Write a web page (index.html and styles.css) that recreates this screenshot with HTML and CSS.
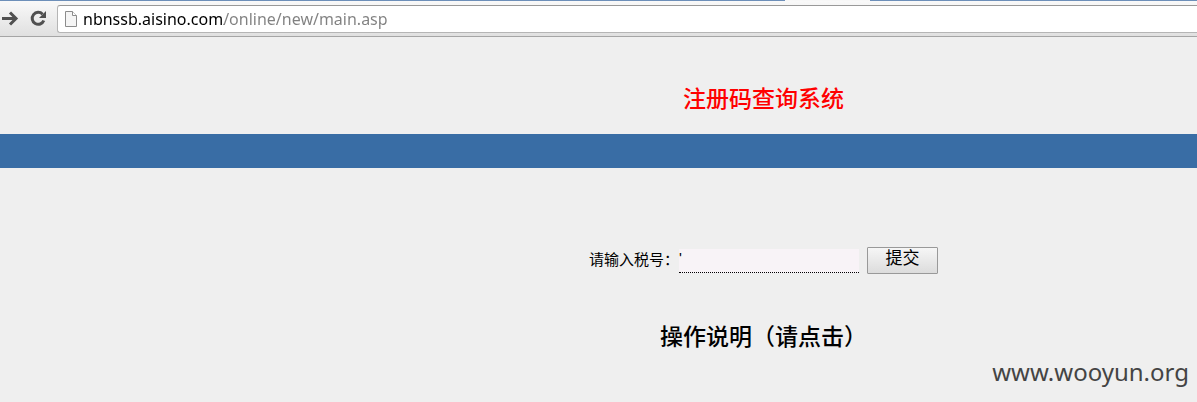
FILE: index.html
```
<!DOCTYPE html>
<html lang="zh-CN">
<head>
  <meta charset="UTF-8" />
  <meta name="viewport" content="width=device-width, initial-scale=1.0"/>
  <title>注册码查询系统</title>
  <link rel="stylesheet" href="styles.css">
</head>
<body>

  <div class="browser">
    <div class="tabs"><div class="tab"></div></div>
    <div class="toolbar">
      <button class="nav-button" type="button" aria-label="前进">
        <svg width="20" height="20" viewBox="0 0 20 20" fill="none" stroke="#505050" stroke-width="3">
          <path d="M2 9.5h14M10 3.5l6 6-6 6"/>
        </svg>
      </button>
      <button class="nav-button" type="button" aria-label="刷新">
        <svg width="20" height="20" viewBox="0 0 20 20">
          <path d="M14.6 5.2A6 6 0 1 0 15.8 11.5" fill="none" stroke="#505050" stroke-width="3"/>
          <path d="M18 2v7h-7z" fill="#505050"/>
        </svg>
      </button>
      <div class="address">
        <svg width="12" height="16" viewBox="0 0 12 16" fill="#f5f5f5" stroke="#8c8c8c">
          <path d="M.5.5h7l4 4v11H.5z"/>
          <path d="M7.5.5v4h4" fill="#fff"/>
        </svg>
        <input type="text" class="url" aria-label="地址" value="nbnssb.aisino.com/online/new/main.asp" />
      </div>
    </div>
  </div>

  <main>
    <h1>注册码查询系统</h1>
    <div class="band"></div>

    <form class="query-form">
      <label for="taxno">请输入税号：</label>
      <input type="text" id="taxno" value="'" />
      <button type="submit">提交</button>
    </form>

    <h2><a href="#help">操作说明（请点击）</a></h2>
  </main>

  <footer>www.wooyun.org</footer>

</body>
</html>
```
FILE: styles.css
```
:root {
  --page-gray: #efefef;
  --band-blue: #396da5;
  --page-shift: 330px;
}

* {
  box-sizing: border-box;
}

body {
  font-family: 'Liberation Sans', 'Noto Sans CJK SC', sans-serif;
  margin: 0;
  background-color: var(--page-gray);
  color: #000;
}

.tabs {
  height: 1px;
  background: #6d8fb9;
  padding-left: 65.6%;
}

.tab {
  width: 85px;
  height: 1px;
  background: #f7f7f7;
}

.toolbar {
  display: flex;
  align-items: center;
  height: 36px;
  background: linear-gradient(#f9f9f9, #e0e0e0);
  border-bottom: 1px solid #a5a5a5;
}

.nav-button {
  display: flex;
  width: 28px;
  padding: 0;
  border: none;
  background: none;
}

.address {
  flex: 1;
  display: flex;
  align-items: center;
  gap: 6px;
  height: 28px;
  margin-left: 1px;
  padding-left: 7px;
  background: #fff;
  border: 1px solid #b5b5b5;
  border-top-color: #999;
  border-right: none;
  border-radius: 3px 0 0 3px;
}

/* host in black, path in gray */
.url {
  flex: 1;
  padding: 0;
  border: none;
  outline: none;
  font: 16px/24px 'Noto Sans', sans-serif;
  color: transparent;
  background: linear-gradient(90deg, #000 141px, #808080 141px);
  -webkit-background-clip: text;
  background-clip: text;
}

h1,
h2 {
  margin: 0;
  padding-left: var(--page-shift);
  font: 500 23px/34px 'Noto Sans CJK SC', sans-serif;
  text-align: center;
}

h1 {
  padding-top: 43px;
  padding-bottom: 20px;
  color: #f00;
}

h2 a {
  color: #000;
  text-decoration: none;
}

.band {
  height: 34px;
  background: var(--band-blue);
}

.query-form {
  display: flex;
  justify-content: center;
  align-items: center;
  padding: 79px 0 44px var(--page-shift);
}

.query-form label {
  padding-bottom: 4px;
  font-size: 15px;
}

.query-form input {
  width: 180px;
  height: 24px;
  padding: 0 0 6px;
  border: none;
  border-bottom: 1px dotted #000;
  background: #f8f3f7;
  font-family: inherit;
  font-size: 15px;
}

.query-form button {
  width: 71px;
  height: 27px;
  margin-left: 8px;
  padding: 0 0 4px;
  border: 1px solid #999;
  border-radius: 1px;
  background: linear-gradient(#f6f6f6, #dcdcdc);
  font-family: inherit;
  font-size: 17px;
  line-height: 20px;
}

footer {
  padding: 3px 8px 8px 0;
  text-align: right;
  font: 24px/34px 'Noto Sans', sans-serif;
  color: #444;
}
```
